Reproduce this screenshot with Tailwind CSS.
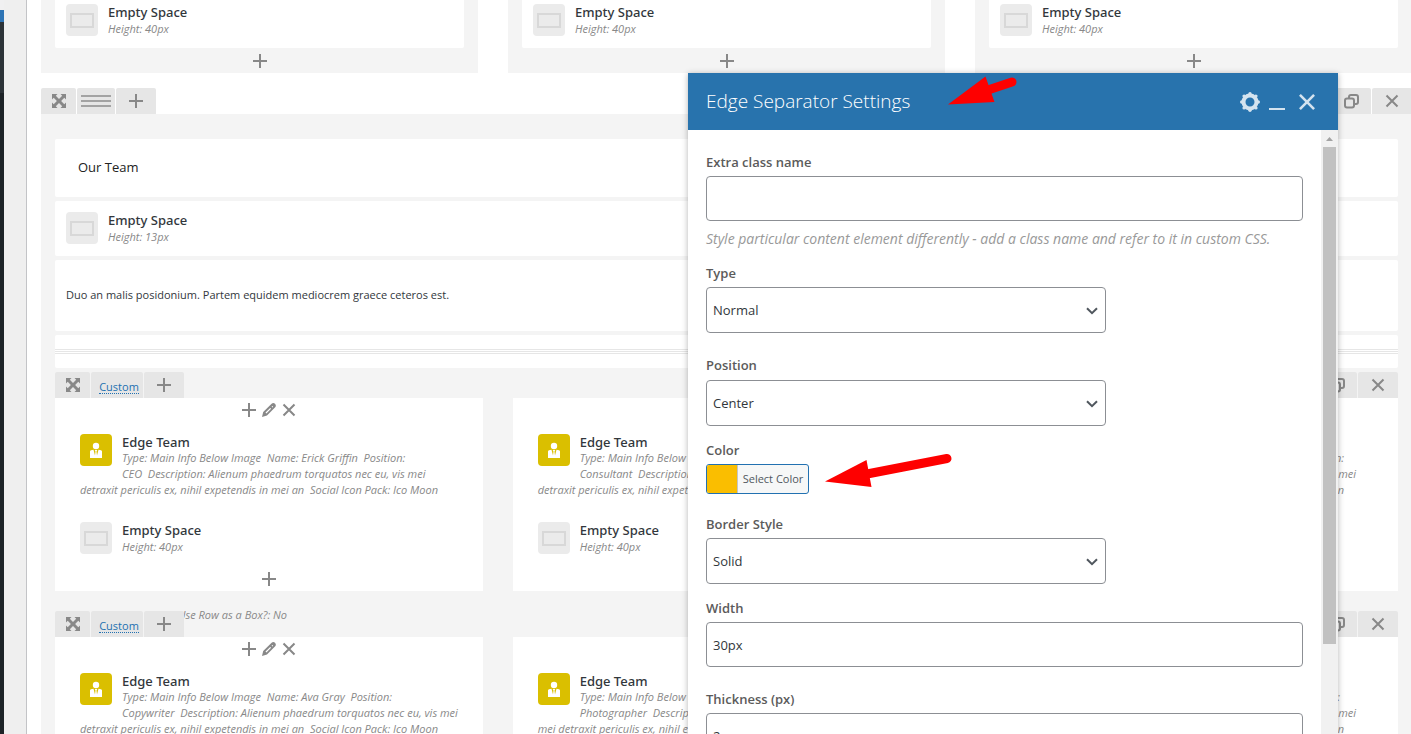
<!DOCTYPE html>
<html lang="en">
<head>
    <meta charset="UTF-8">
    <meta name="viewport" content="width=device-width, initial-scale=1.0">
    <title>Edge Separator Settings</title>
    <script src="https://cdn.jsdelivr.net/npm/@tailwindcss/browser@4"></script>
    <style>
        body {
            font-family: 'Open Sans', 'Noto Sans', sans-serif;
        }
        h4 {
            font-family: 'Noto Sans', sans-serif;
        }
    </style>
</head>
<body class="h-screen overflow-hidden bg-white text-[#23282d]">
    <!-- Icon sprite -->
    <svg class="hidden">
        <symbol id="i-plus" viewBox="0 0 14 14"><path d="M7 0v14M0 7h14" stroke="currentColor" stroke-width="2" fill="none"/></symbol>
        <symbol id="i-close" viewBox="0 0 14 14"><path d="M1.5 1.5l11 11M12.500 1.500l-11 11" stroke="currentColor" stroke-width="2" fill="none"/></symbol>
        <symbol id="i-move" viewBox="0 0 14 14"><path fill="currentColor" d="M0 0h5.500L3.800 1.700 7 4.900l3.200-3.200L8.500 0H14v5.500l-1.700-1.700L9.100 7l3.200 3.200L14 8.500V14H8.500l1.700-1.700L7 9.100l-3.200 3.200L5.500 14H0V8.500l1.700 1.700L4.900 7 1.700 3.800 0 5.500z"/></symbol>
        <symbol id="i-pencil" viewBox="0 0 14 14"><path fill="currentColor" fill-rule="evenodd" d="M0 14l1.200-5L9.600.8c1-1 2.400-1 3.400 0s1.200 2.400.2 3.400L5 12.600zM3.500 9.600l.9.900 4.700-4.700-.9-.9zM9.600 3.600l.9.900.7-.7-.9-.9z"/></symbol>
        <symbol id="i-copy" viewBox="0 0 15 15"><rect x="1" y="4.500" width="9" height="9" rx="2" fill="none" stroke="currentColor" stroke-width="2"/><path d="M5 4V3a2 2 0 0 1 2-2h5a2 2 0 0 1 2 2v5a2 2 0 0 1-2 2h-1.500" fill="none" stroke="currentColor" stroke-width="2"/></symbol>
        <symbol id="i-space" viewBox="0 0 32 32"><rect width="32" height="32" rx="4" fill="#ebebeb"/><rect x="5" y="10" width="22" height="13" fill="none" stroke="#d8d8d8" stroke-width="2"/></symbol>
        <symbol id="i-team" viewBox="0 0 32 32"><rect width="32" height="32" rx="4" fill="#dabf00"/><circle cx="16" cy="12" r="3.200" fill="#fff"/><path fill="#fff" d="M10 24v-6.500q0-1 1-1.200l2.500-.5L15 21.500l.5-4-.8-1.500h2.600l-.8 1.500.5 4 1.500-5.700 2.500.5q1 .2 1 1.200V24z"/></symbol>
        <symbol id="i-chevron" viewBox="0 0 12 8"><path d="M1 1.200l5 5 5-5" fill="none" stroke="#50575e" stroke-width="2"/></symbol>
        <symbol id="i-gear" viewBox="0 0 20 20"><circle cx="10" cy="10" r="6.500" fill="none" stroke="currentColor" stroke-width="4"/><g fill="currentColor"><circle cx="10" cy="1.700" r="1.700"/><circle cx="15.900" cy="4.100" r="1.700"/><circle cx="18.300" cy="10" r="1.700"/><circle cx="15.900" cy="15.900" r="1.700"/><circle cx="10" cy="18.300" r="1.700"/><circle cx="4.100" cy="15.900" r="1.700"/><circle cx="1.700" cy="10" r="1.700"/><circle cx="4.100" cy="4.100" r="1.700"/></g></symbol>
    </svg>

    <div class="flex h-full">
        <!-- Admin menu edge -->
        <aside class="w-1 shrink-0 bg-[#1d2327]">
            <div class="h-[93px] bg-[#2c3338]"><div class="h-[22px] bg-[#2e74b5]"><div class="h-2.5 bg-[#f0f0f1]"></div></div></div>
        </aside>
        <div class="w-[23px] shrink-0 border-r border-[#c3c4c7] bg-[#efefef]"></div>

        <main class="-mr-px min-w-0 flex-1 pl-3.5 text-[#888]">
            <!-- Row 1 -->
            <section class="grid h-[73px] grid-cols-3 gap-[30px]">
                <div class="bg-[#f4f4f4] px-3.5">
                    <div class="flex h-12 gap-2.5 rounded-b-xs bg-white px-[11px] pt-1">
                        <svg class="size-8 shrink-0"><use href="#i-space"/></svg>
                        <div>
                            <h4 class="text-[13px] leading-[17px] font-medium text-[#32373c]">Empty Space</h4>
                            <p class="text-[11px] leading-4 italic">Height: 40px</p>
                        </div>
                    </div>
                    <button class="mx-auto mt-1.5 block"><svg class="size-3.5"><use href="#i-plus"/></svg></button>
                </div>
                <div class="bg-[#f4f4f4] px-3.5">
                    <div class="flex h-12 gap-2.5 rounded-b-xs bg-white px-[11px] pt-1">
                        <svg class="size-8 shrink-0"><use href="#i-space"/></svg>
                        <div>
                            <h4 class="text-[13px] leading-[17px] font-medium text-[#32373c]">Empty Space</h4>
                            <p class="text-[11px] leading-4 italic">Height: 40px</p>
                        </div>
                    </div>
                    <button class="mx-auto mt-1.5 block"><svg class="size-3.5"><use href="#i-plus"/></svg></button>
                </div>
                <div class="bg-[#f4f4f4] px-3.5">
                    <div class="flex h-12 gap-2.5 rounded-b-xs bg-white px-[11px] pt-1">
                        <svg class="size-8 shrink-0"><use href="#i-space"/></svg>
                        <div>
                            <h4 class="text-[13px] leading-[17px] font-medium text-[#32373c]">Empty Space</h4>
                            <p class="text-[11px] leading-4 italic">Height: 40px</p>
                        </div>
                    </div>
                    <button class="mx-auto mt-1.5 block"><svg class="size-3.5"><use href="#i-plus"/></svg></button>
                </div>
            </section>

            <!-- Row 2 controls -->
            <div class="mt-[15px] flex h-[26px] gap-px">
                <button class="grid w-[35px] place-items-center rounded-t-xs bg-[#e6e6e6]"><svg class="size-3.5"><use href="#i-move"/></svg></button>
                <button class="grid w-[38px] place-items-center rounded-t-xs bg-[#e6e6e6]">
                    <span class="flex w-[30px] flex-col gap-[3px]"><span class="h-0.5 bg-[#a3a3a3]"></span><span class="h-0.5 bg-[#a3a3a3]"></span><span class="h-0.5 bg-[#a3a3a3]"></span></span>
                </button>
                <button class="grid w-10 place-items-center rounded-t-xs bg-[#e6e6e6]"><svg class="size-3.5"><use href="#i-plus"/></svg></button>
                <button class="ml-auto grid w-10 place-items-center rounded-t-xs bg-[#e6e6e6]"><svg class="size-[15px]"><use href="#i-copy"/></svg></button>
                <button class="grid w-10 place-items-center rounded-t-xs bg-[#e6e6e6]"><svg class="size-3.5"><use href="#i-close"/></svg></button>
            </div>

            <!-- Row 2 content -->
            <section class="bg-[#f4f4f4] px-3.5 pt-[25px]">
                <div class="flex flex-col gap-1">
                    <div class="flex h-[58px] items-center rounded-xs bg-white px-[23px] text-[13px] text-[#222]">Our Team</div>
                    <div class="flex h-[55px] gap-2.5 rounded-xs bg-white p-[11px]">
                        <svg class="size-8 shrink-0"><use href="#i-space"/></svg>
                        <div>
                            <h4 class="text-[13px] leading-[17px] font-medium text-[#32373c]">Empty Space</h4>
                            <p class="text-[11px] leading-4 italic">Height: 13px</p>
                        </div>
                    </div>
                    <div class="flex h-[71px] items-center rounded-xs bg-white px-[11px] text-[11px] text-[#32373c]">Duo an malis posidonium. Partem equidem mediocrem graece ceteros est.</div>
                    <div class="h-[33px] rounded-xs bg-white pt-3.5">
                        <div class="flex flex-col gap-px"><span class="h-px bg-[#e6e6e6]"></span><span class="h-px bg-[#e6e6e6]"></span><span class="h-px bg-[#e6e6e6]"></span></div>
                    </div>
                </div>

                <!-- Inner row 1 -->
                <div class="mt-1 flex h-[26px] gap-px">
                    <button class="grid w-[35px] place-items-center rounded-t-xs bg-[#e6e6e6]"><svg class="size-3.5"><use href="#i-move"/></svg></button>
                    <div class="grid w-[52px] place-items-center rounded-t-xs bg-[#e6e6e6] pt-1 pl-1"><a href="#" class="border-b border-dotted border-[#2271b1] text-[11px] leading-[13px] text-[#2271b1]">Custom</a></div>
                    <button class="grid w-10 place-items-center rounded-t-xs bg-[#e6e6e6]"><svg class="size-3.5"><use href="#i-plus"/></svg></button>
                    <button class="ml-auto grid w-10 place-items-center rounded-t-xs bg-[#e6e6e6]"><svg class="size-[15px]"><use href="#i-copy"/></svg></button>
                    <button class="grid w-10 place-items-center rounded-t-xs bg-[#e6e6e6]"><svg class="size-3.5"><use href="#i-close"/></svg></button>
                </div>
                <div class="grid grid-cols-3 gap-[30px]">
                    <div class="h-[193px] overflow-hidden bg-white px-[25px] pt-[5px] whitespace-nowrap">
                        <div class="flex h-3.5 justify-center gap-1.5">
                            <button><svg class="size-3.5"><use href="#i-plus"/></svg></button>
                            <button><svg class="size-3.5"><use href="#i-pencil"/></svg></button>
                            <button><svg class="size-3.5"><use href="#i-close"/></svg></button>
                        </div>
                        <div class="mt-[17px] h-[88px]">
                            <svg class="float-left mr-2.5 mb-1.5 size-8"><use href="#i-team"/></svg>
                            <h4 class="text-[13px] leading-4 font-medium text-[#32373c]">Edge Team</h4>
                            <p class="text-[11px] leading-4 italic">Type: Main Info Below Image&nbsp; Name: Erick Griffin&nbsp; Position:<br>CEO&nbsp; Description: Alienum phaedrum torquatos nec eu, vis mei<br>detraxit periculis ex, nihil expetendis in mei an&nbsp; Social Icon Pack: Ico Moon</p>
                        </div>
                        <div class="flex gap-2.5">
                            <svg class="size-8 shrink-0"><use href="#i-space"/></svg>
                            <div>
                                <h4 class="text-[13px] leading-[17px] font-medium text-[#32373c]">Empty Space</h4>
                                <p class="text-[11px] leading-4 italic">Height: 40px</p>
                            </div>
                        </div>
                        <button class="mx-auto mt-[17px] block"><svg class="size-3.5"><use href="#i-plus"/></svg></button>
                    </div>
                    <div class="h-[193px] overflow-hidden bg-white px-[25px] pt-9 whitespace-nowrap">
                        <div class="h-[88px]">
                            <svg class="float-left mr-2.5 mb-1.5 size-8"><use href="#i-team"/></svg>
                            <h4 class="text-[13px] leading-4 font-medium text-[#32373c]">Edge Team</h4>
                            <p class="text-[11px] leading-4 italic">Type: Main Info Below Image<br>Consultant&nbsp; Description:<br>detraxit periculis ex, nihil expetendis</p>
                        </div>
                        <div class="flex gap-2.5">
                            <svg class="size-8 shrink-0"><use href="#i-space"/></svg>
                            <div>
                                <h4 class="text-[13px] leading-[17px] font-medium text-[#32373c]">Empty Space</h4>
                                <p class="text-[11px] leading-4 italic">Height: 40px</p>
                            </div>
                        </div>
                    </div>
                    <div class="h-[193px] overflow-hidden bg-white px-[42px] pt-[52px] text-right whitespace-nowrap">
                        <p class="text-[11px] leading-4 italic"><span class="pr-3">Position:</span><br>vis mei<br><span class="pr-3">Ico Moon</span></p>
                    </div>
                </div>

                <!-- Inner row 2 -->
                <div class="relative mt-5 flex h-[26px] gap-px">
                    <p class="absolute -top-1 left-[123px] text-[11px] leading-4 italic">Use Row as a Box?: No</p>
                    <button class="grid w-[35px] place-items-center rounded-t-xs bg-[#e6e6e6]"><svg class="size-3.5"><use href="#i-move"/></svg></button>
                    <div class="grid w-[52px] place-items-center rounded-t-xs bg-[#e6e6e6] pt-1 pl-1"><a href="#" class="border-b border-dotted border-[#2271b1] text-[11px] leading-[13px] text-[#2271b1]">Custom</a></div>
                    <button class="relative grid w-10 place-items-center rounded-t-xs bg-[#e6e6e6]"><svg class="size-3.5"><use href="#i-plus"/></svg></button>
                    <button class="ml-auto grid w-10 place-items-center rounded-t-xs bg-[#e6e6e6]"><svg class="size-[15px]"><use href="#i-copy"/></svg></button>
                    <button class="grid w-10 place-items-center rounded-t-xs bg-[#e6e6e6]"><svg class="size-3.5"><use href="#i-close"/></svg></button>
                </div>
                <div class="grid grid-cols-3 gap-[30px]">
                    <div class="h-[193px] overflow-hidden bg-white px-[25px] pt-[5px] whitespace-nowrap">
                        <div class="flex h-3.5 justify-center gap-1.5">
                            <button><svg class="size-3.5"><use href="#i-plus"/></svg></button>
                            <button><svg class="size-3.5"><use href="#i-pencil"/></svg></button>
                            <button><svg class="size-3.5"><use href="#i-close"/></svg></button>
                        </div>
                        <div class="mt-[17px]">
                            <svg class="float-left mr-2.5 mb-1.5 size-8"><use href="#i-team"/></svg>
                            <h4 class="text-[13px] leading-4 font-medium text-[#32373c]">Edge Team</h4>
                            <p class="text-[11px] leading-4 italic">Type: Main Info Below Image&nbsp; Name: Ava Gray&nbsp; Position:<br>Copywriter&nbsp; Description: Alienum phaedrum torquatos nec eu, vis mei<br>detraxit periculis ex, nihil expetendis in mei an&nbsp; Social Icon Pack: Ico Moon</p>
                        </div>
                    </div>
                    <div class="h-[193px] overflow-hidden bg-white px-[25px] pt-9 whitespace-nowrap">
                        <svg class="float-left mr-2.5 mb-1.5 size-8"><use href="#i-team"/></svg>
                        <h4 class="text-[13px] leading-4 font-medium text-[#32373c]">Edge Team</h4>
                        <p class="text-[11px] leading-4 italic">Type: Main Info Below Image<br>Photographer&nbsp; Description:<br>mei detraxit periculis ex, nihil expetendis</p>
                    </div>
                    <div class="h-[193px] overflow-hidden bg-white px-[42px] pt-[52px] text-right whitespace-nowrap">
                        <p class="text-[11px] leading-4 italic"><span class="pr-4">Position:</span><br>vis mei<br><span class="pr-3">Ico Moon</span></p>
                    </div>
                </div>
            </section>
        </main>
    </div>

    <!-- Settings panel -->
    <div role="dialog" aria-labelledby="panelTitle" class="absolute top-[73px] right-[73px] bottom-0 flex w-[650px] flex-col bg-white shadow-[0_1px_6px_rgba(0,0,0,0.3)]">
        <header class="flex h-[57px] shrink-0 items-center bg-[#2873ad] px-[18px] text-[#d4e3ef]">
            <h2 id="panelTitle" class="flex-1 text-[19px] font-light text-white">Edge Separator Settings</h2>
            <div class="flex items-center gap-[9px] pr-1">
                <button aria-label="Settings"><svg class="block size-5"><use href="#i-gear"/></svg></button>
                <button aria-label="Minimize" class="h-4 w-4 border-b-2"></button>
                <button aria-label="Close" class="ml-1"><svg class="block size-[18px]"><use href="#i-close"/></svg></button>
            </div>
        </header>
        <div class="flex min-h-0 flex-1">
            <form class="flex-1 overflow-hidden px-[18px] pt-[22px] text-sm text-[#32373c]">
                <label for="extraClass" class="mb-1 block h-5 text-[13px] leading-5 font-semibold text-[#5b5b5b]">Extra class name</label>
                <input id="extraClass" type="text" class="block h-[45px] w-full rounded-sm border border-[#8c8f94] px-1.5">
                <p class="mt-2 mb-3.5 text-sm leading-5 text-[#999] italic">Style particular content element differently - add a class name and refer to it in custom CSS.</p>

                <label for="type" class="mb-1 block h-5 text-[13px] leading-5 font-semibold text-[#5b5b5b]">Type</label>
                <div class="relative mb-[22px] w-[400px]">
                    <select id="type" class="block h-[46px] w-full appearance-none rounded-sm border border-[#8c8f94] px-1.5 text-[13px]"><option>Normal</option></select>
                    <svg class="pointer-events-none absolute top-5 right-2 h-2 w-3"><use href="#i-chevron"/></svg>
                </div>

                <label for="position" class="mb-[5px] block h-5 text-[13px] leading-5 font-semibold text-[#5b5b5b]">Position</label>
                <div class="relative mb-3.5 w-[400px]">
                    <select id="position" class="block h-[46px] w-full appearance-none rounded-sm border border-[#8c8f94] px-1.5 text-[13px]"><option>Center</option></select>
                    <svg class="pointer-events-none absolute top-5 right-2 h-2 w-3"><use href="#i-chevron"/></svg>
                </div>

                <label for="color" class="mb-1 block h-5 text-[13px] leading-5 font-semibold text-[#5b5b5b]">Color</label>
                <button id="color" type="button" class="mb-5 flex h-[30px] w-[103px] overflow-hidden rounded-[3px] border border-[#2271b1] bg-[#f6f7f7] text-[11px] leading-7 text-[#50575e]">
                    <span class="h-full w-[31px] border-r border-[#c3c4c7] bg-[#fabe00]"></span>
                    <span class="flex-1 text-center">Select Color</span>
                </button>

                <label for="borderStyle" class="mb-1 block h-5 text-[13px] leading-5 font-semibold text-[#5b5b5b]">Border Style</label>
                <div class="relative mb-3.5 w-[400px]">
                    <select id="borderStyle" class="block h-[46px] w-full appearance-none rounded-sm border border-[#8c8f94] px-1.5 text-[13px]"><option>Solid</option></select>
                    <svg class="pointer-events-none absolute top-5 right-2 h-2 w-3"><use href="#i-chevron"/></svg>
                </div>

                <label for="width" class="mb-1 block h-5 text-[13px] leading-5 font-semibold text-[#5b5b5b]">Width</label>
                <input id="width" type="text" value="30px" class="mb-[22px] block h-[45px] w-full rounded-sm border border-[#8c8f94] px-1.5 text-[13px]">

                <label for="thickness" class="mb-1 block h-5 text-[13px] leading-5 font-semibold text-[#5b5b5b]">Thickness (px)</label>
                <input id="thickness" type="text" value="2" class="block h-[45px] w-full rounded-sm border border-[#8c8f94] px-1.5 text-[13px]">
            </form>
            <!-- Scrollbar -->
            <div class="flex w-[17px] shrink-0 flex-col items-center bg-[#f1f1f1]">
                <svg class="h-[17px] w-[17px] shrink-0" viewBox="0 0 17 17"><path d="M5 11l3.500-4 3.500 4z" fill="#a3a3a3"/></svg>
                <div class="h-[497px] w-[13px] shrink-0 bg-[#c1c1c1]"></div>
            </div>
        </div>

        <!-- Pointers -->
        <svg class="pointer-events-none absolute top-0 left-[260px] h-10 w-[72px] text-[#fe0000]" viewBox="0 0 72 40">
            <path d="M0 31.500L37.500 3.500l9 25.500z" fill="currentColor"/>
            <path d="M40 17l24-8" stroke="currentColor" stroke-width="9" stroke-linecap="round"/>
        </svg>
        <svg class="pointer-events-none absolute top-[375px] left-[137px] h-14 w-[130px] text-[#fe0000]" viewBox="0 0 130 56">
            <path d="M0 33.500L41.500 12l5 27z" fill="currentColor"/>
            <path d="M42 26l80-15.500" stroke="currentColor" stroke-width="9" stroke-linecap="round"/>
        </svg>
    </div>
</body>
</html>
